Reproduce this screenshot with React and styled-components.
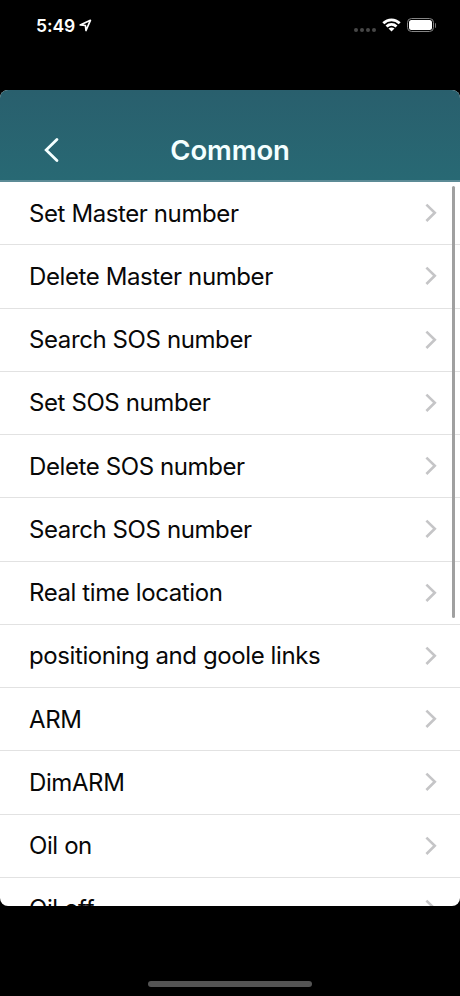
import React from 'react';
import styled, { createGlobalStyle } from 'styled-components';

const commands = [
    'Set Master number',
    'Delete Master number',
    'Search SOS number',
    'Set SOS number',
    'Delete SOS number',
    'Search SOS number',
    'Real time location',
    'positioning and goole links',
    'ARM',
    'DimARM',
    'Oil on',
    'Oil off',
];

const App = () => {
    return (
        <Screen>
            <GlobalStyle />

            <StatusBar>
                <Clock>
                    5:49
                    <LocationArrow viewBox='0 0 13 13'>
                        <path d='M1.2 5.9 11.4 1.3 7 11.5 6.4 6.5Z' />
                    </LocationArrow>
                </Clock>
                <Signals>
                    <Dots><i /><i /><i /><i /></Dots>
                    <Wifi viewBox='0 0 19 14'>
                        <path d='M1.3 5.3C6 .7 13 .7 17.7 5.3M4.5 8.5C7.4 5.8 11.6 5.8 14.5 8.5' />
                        <path className='dot' d='M6.5 10.6Q9.5 8.2 12.5 10.6L9.5 13.6Z' />
                    </Wifi>
                    <Battery />
                    <BatteryTip />
                </Signals>
            </StatusBar>

            <Panel>
                <Header>
                    <BackButton aria-label='Back'>
                        <svg viewBox='0 0 15 24'>
                            <path d='M12.9 1.6 2.2 12 12.9 22.4' />
                        </svg>
                    </BackButton>
                    <Title>Common</Title>
                </Header>
                <List>
                    {commands.map((label, index) => (
                        <Row key={index}>
                            <Label>{label}</Label>
                            <Chevron viewBox='0 0 12 20'>
                                <path d='M1.4 1.6 9.8 9.8 1.4 18' />
                            </Chevron>
                        </Row>
                    ))}
                    <Scrollbar />
                </List>
            </Panel>

            <HomeArea>
                <HomeIndicator />
            </HomeArea>
        </Screen>
    );
}

const GlobalStyle = createGlobalStyle`
    * {
        box-sizing: border-box;
    }

    body {
        margin: 0;
        background: #000;
        overflow: hidden;
    }
`

const Screen = styled.div`
    width: 460px;
    height: 996px;
    display: flex;
    flex-direction: column;
    background: #000;
    font-family: Inter, 'Liberation Sans', sans-serif;
`

const StatusBar = styled.div`
    height: 90px;
    padding: 13px 24px 0 36px;
    display: flex;
    justify-content: space-between;
    align-items: flex-start;
    color: #fff;
`

const Clock = styled.div`
    height: 24px;
    display: flex;
    align-items: center;
    font-size: 17.5px;
    font-weight: 600;
    letter-spacing: -0.1px;
`

const LocationArrow = styled.svg`
    width: 13px;
    height: 13px;
    margin-left: 4px;
    fill: none;
    stroke: #fff;
    stroke-width: 1.7;
    stroke-linejoin: round;
`

const Signals = styled.div`
    height: 24px;
    display: flex;
    align-items: center;
`

const Dots = styled.div`
    display: flex;
    gap: 2px;
    margin: 9px 6px 0 0;

    i {
        width: 4px;
        height: 4px;
        border-radius: 50%;
        background: #474747;
    }
`

const Wifi = styled.svg`
    width: 19px;
    height: 14px;
    margin-right: 6px;
    fill: none;
    stroke: #fff;
    stroke-width: 2.8;

    .dot {
        fill: #fff;
        stroke: none;
    }
`

const Battery = styled.div`
    width: 27px;
    height: 14px;
    border: 1px solid #858585;
    border-radius: 4.5px;
    background: #fff;
    background-clip: content-box;
    padding: 1px;
    overflow: hidden;
`

const BatteryTip = styled.div`
    width: 1.5px;
    height: 5px;
    margin-left: 1px;
    border-radius: 0 2px 2px 0;
    background: #777;
`

const Panel = styled.main`
    height: 816px;
    display: flex;
    flex-direction: column;
    border-radius: 8px;
    background: #fff;
    overflow: hidden;
`

const Header = styled.header`
    flex: none;
    height: 92px;
    padding-top: 30px;
    display: grid;
    grid-template-columns: 104px 1fr 104px;
    align-items: center;
    background: linear-gradient(#295f6d, #286974);
    border-bottom: 2px solid #5c8b96;
`

const BackButton = styled.button`
    display: flex;
    width: 15px;
    height: 24px;
    margin: 0 0 1px 44px;
    padding: 0;
    border: 0;
    background: none;

    svg {
        width: 15px;
        height: 24px;
        fill: none;
        stroke: #f4ffff;
        stroke-width: 2.8;
        stroke-linecap: round;
    }
`

const Title = styled.h1`
    margin: 0;
    padding-bottom: 1px;
    text-align: center;
    color: #f4ffff;
    font-size: 27.5px;
    font-weight: 600;
    line-height: 34px;
    letter-spacing: -0.1px;
`

const List = styled.div`
    position: relative;
    flex: 1;
    min-height: 0;
    overflow: hidden;
`

const Row = styled.div`
    height: 63.26px;
    padding: 0 23px 0 29px;
    display: flex;
    justify-content: space-between;
    align-items: center;
    border-bottom: 1px solid #e2e2e2;
`

const Label = styled.span`
    padding-top: 1px;
    color: #080808;
    font-size: 24px;
    line-height: 32px;
    white-space: nowrap;
    letter-spacing: -0.4px;
`

const Chevron = styled.svg`
    width: 12px;
    height: 20px;
    fill: none;
    stroke: #c5c5c7;
    stroke-width: 2.6;
`

const Scrollbar = styled.div`
    position: absolute;
    top: 4px;
    right: 5px;
    width: 3px;
    height: 432px;
    border-radius: 2px;
    background: #a0a0a0;
`

const HomeArea = styled.div`
    flex: 1;
    padding-bottom: 9px;
    display: flex;
    justify-content: center;
    align-items: flex-end;
`

const HomeIndicator = styled.div`
    width: 164px;
    height: 6px;
    border-radius: 3px;
    background: #545454;
`

export default App;
